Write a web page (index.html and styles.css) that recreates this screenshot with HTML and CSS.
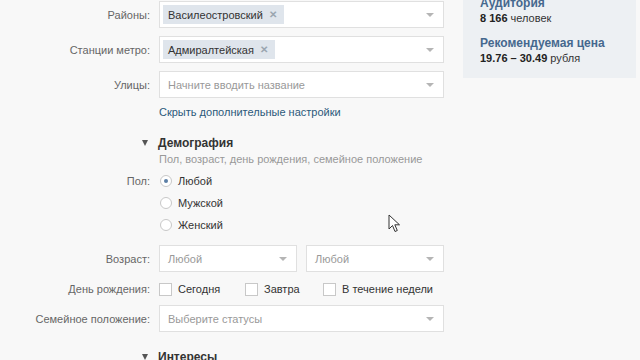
FILE: index.html
```html
<!DOCTYPE html>
<html>
<head>
	<meta charset="UTF-8">
	<title>Настройки аудитории</title>
	<link rel="stylesheet" href="styles.css">
</head>
<body>
	<div class="page">
		<div class="form">
			<div class="row">
				<div class="label">Районы:</div>
				<div class="field">
					<span class="tag">Василеостровский<i class="x">&#x2715;</i></span>
					<span class="grow"></span>
					<span class="arrow"></span>
				</div>
			</div>
			<div class="row">
				<div class="label">Станции метро:</div>
				<div class="field">
					<span class="tag">Адмиралтейская<i class="x">&#x2715;</i></span>
					<span class="grow"></span>
					<span class="arrow"></span>
				</div>
			</div>
			<div class="row">
				<div class="label">Улицы:</div>
				<div class="field">
					<span class="ph grow">Начните вводить название</span>
					<span class="arrow"></span>
				</div>
			</div>
			<div class="more"><a href="#">Скрыть дополнительные настройки</a></div>

			<div class="section">
				<span class="tri"></span>Демография
			</div>
			<div class="sub">Пол, возраст, день рождения, семейное положение</div>

			<div class="radios">
				<div class="rlabel">Пол:</div>
				<div class="rlist">
					<div class="radio on"><span class="dot"></span>Любой</div>
					<div class="radio"><span class="dot"></span>Мужской</div>
					<div class="radio"><span class="dot"></span>Женский</div>
				</div>
			</div>

			<div class="row age">
				<div class="label">Возраст:</div>
				<div class="field half">
					<span class="ph grow">Любой</span>
					<span class="arrow"></span>
				</div>
				<div class="field half">
					<span class="ph grow">Любой</span>
					<span class="arrow"></span>
				</div>
			</div>

			<div class="row bday">
				<div class="label">День рождения:</div>
				<div class="checks">
					<div class="check"><span class="box"></span>Сегодня</div>
					<div class="check"><span class="box"></span>Завтра</div>
					<div class="check"><span class="box"></span>В течение недели</div>
				</div>
			</div>

			<div class="row family">
				<div class="label">Семейное положение:</div>
				<div class="field">
					<span class="ph grow">Выберите статусы</span>
					<span class="arrow"></span>
				</div>
			</div>

			<div class="section last">
				<span class="tri"></span>Интересы
			</div>
		</div>

		<div class="side">
			<div class="s-title">Аудитория</div>
			<div class="s-val"><b>8 166</b> человек</div>
			<div class="s-title second">Рекомендуемая цена</div>
			<div class="s-val"><b>19.76 – 30.49</b> рубля</div>
		</div>
	</div>

	<svg class="cursor" width="14" height="20" viewBox="0 0 14 20">
		<path d="M1 1 L1 15 L4.5 11.5 L7 17.5 L9.3 16.5 L6.8 10.8 L11.5 10.8 Z" fill="#fff" stroke="#333" stroke-width="1" stroke-linejoin="round"/>
	</svg>
</body>
</html>
```

FILE: styles.css
```css
html, body {margin: 0;padding: 0;}
body {background: #f8f8f8;font-family: "Liberation Sans", Arial, sans-serif;font-size: 11px;color: #333;overflow: hidden;height: 360px;}
.page {display: flex;align-items: flex-start;}
.form {width: 444px;padding-top: 1px;}

.row {display: flex;align-items: center;margin-top: 8px;}
.row:first-child {margin-top: 0;}
.label {width: 150px;padding-right: 9px;text-align: right;color: #666;flex-shrink: 0;}

.field {display: flex;align-items: center;box-sizing: border-box;width: 285px;height: 27px;background: #fff;border: 1px solid #e0e0e0;padding: 0 9px 0 3px;}
.field .ph {color: #999;padding-left: 5px;}
.grow {flex: 1;}
.arrow {width: 0;height: 0;border-left: 4px solid transparent;border-right: 4px solid transparent;border-top: 4px solid #b5b5b5;}
.half {width: 138px;}
.half + .half {margin-left: 9px;width: 138px;}

.tag {display: inline-flex;align-items: center;height: 19px;background: #dfe5ec;color: #333;padding: 0 7px 0 5px;}
.tag .x {font-style: normal;color: #9aa5b0;font-size: 10px;font-weight: bold;margin-left: 6px;}

.more {padding-left: 159px;margin-top: 7px;line-height: 14px;}
.more a {color: #2b587a;text-decoration: none;}

.section {display: flex;align-items: center;margin-top: 16px;padding-left: 142px;line-height: 16px;font-size: 12px;font-weight: bold;color: #333;}
.section .tri {width: 0;height: 0;border-left: 3.5px solid transparent;border-right: 3.5px solid transparent;border-top: 6px solid #555;margin-right: 10px;}
.section.last {margin-top: 17px;}
.sub {padding-left: 159px;margin-top: 1px;line-height: 14px;color: #999;}

.radios {display: flex;margin-top: 4px;}
.rlabel {width: 150px;padding-right: 9px;text-align: right;color: #666;line-height: 22px;}
.radio {display: flex;align-items: center;height: 22px;color: #333;}
.radio .dot {box-sizing: border-box;width: 12px;height: 12px;border: 1px solid #c8c8c8;border-radius: 50%;background: #fff;margin: 0 6px 0 1px;display: flex;align-items: center;justify-content: center;}
.radio.on .dot:after {content: '';width: 4px;height: 4px;border-radius: 50%;background: #5b7fa6;}

.age {margin-top: 9px;}
.bday {height: 18px;}
.checks {display: grid;grid-template-columns: 86px 78px auto;}
.check {display: flex;align-items: center;color: #333;}
.check .box {box-sizing: border-box;width: 13px;height: 13px;border: 1px solid #c8c8c8;background: #fff;margin-right: 6px;}
.family {margin-top: 7px;}

.side {box-sizing: border-box;width: 173px;margin-left: 19px;margin-top: -10px;padding: 5px 17px 13px;background: #edf0f3;}
.s-title {font-size: 12px;font-weight: bold;color: #45688e;line-height: 16px;}
.s-title.second {margin-top: 10px;}
.s-val {line-height: 14px;color: #333;}
.s-val b {color: #222;}

.cursor {position: absolute;left: 388px;top: 214px;}
```
